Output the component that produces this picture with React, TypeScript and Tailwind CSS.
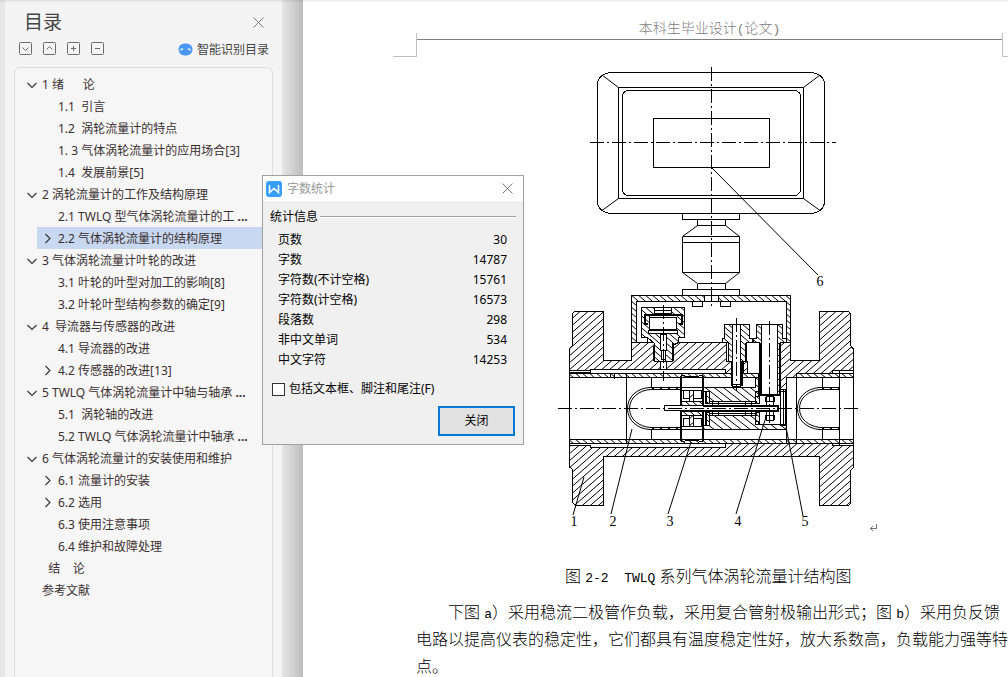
import React, { useState } from 'react';

interface TocItem {
  level: 1 | 2;
  text: string;
  toggle?: 'open' | 'closed';
  active?: boolean;
  cut?: boolean;
}

const tocItems: TocItem[] = [
  { level: 1, text: '1 绪      论', toggle: 'open' },
  { level: 2, text: '1.1  引言' },
  { level: 2, text: '1.2  涡轮流量计的特点' },
  { level: 2, text: '1. 3 气体涡轮流量计的应用场合[3]' },
  { level: 2, text: '1.4  发展前景[5]' },
  { level: 1, text: '2 涡轮流量计的工作及结构原理', toggle: 'open' },
  { level: 2, text: '2.1 TWLQ 型气体涡轮流量计的工', cut: true },
  { level: 2, text: '2.2 气体涡轮流量计的结构原理', toggle: 'closed', active: true },
  { level: 1, text: '3 气体涡轮流量计叶轮的改进', toggle: 'open' },
  { level: 2, text: '3.1 叶轮的叶型对加工的影响[8]' },
  { level: 2, text: '3.2 叶轮叶型结构参数的确定[9]' },
  { level: 1, text: '4  导流器与传感器的改进', toggle: 'open' },
  { level: 2, text: '4.1 导流器的改进' },
  { level: 2, text: '4.2 传感器的改进[13]', toggle: 'closed' },
  { level: 1, text: '5 TWLQ 气体涡轮流量计中轴与轴承', toggle: 'open', cut: true },
  { level: 2, text: '5.1  涡轮轴的改进' },
  { level: 2, text: '5.2 TWLQ 气体涡轮流量计中轴承', cut: true },
  { level: 1, text: '6 气体涡轮流量计的安装使用和维护', toggle: 'open' },
  { level: 2, text: '6.1 流量计的安装', toggle: 'closed' },
  { level: 2, text: '6.2 选用', toggle: 'closed' },
  { level: 2, text: '6.3 使用注意事项' },
  { level: 2, text: '6.4 维护和故障处理' },
  { level: 1, text: '  结    论' },
  { level: 1, text: '参考文献' },
];

const stats = [
  { label: '页数', value: '30' },
  { label: '字数', value: '14787' },
  { label: '字符数(不计空格)', value: '15761' },
  { label: '字符数(计空格)', value: '16573' },
  { label: '段落数', value: '298' },
  { label: '非中文单词', value: '534' },
  { label: '中文字符', value: '14253' },
];

const toolButtons = [
  { name: '展开', d: 'M3.5 5.5 L6.5 8.5 L9.5 5.5' },
  { name: '收起', d: 'M3.5 7.5 L6.5 4.5 L9.5 7.5' },
  { name: '放大', d: 'M4 6.5 H9 M6.5 4 V9' },
  { name: '缩小', d: 'M4 6.5 H9' },
];

function CloseIcon() {
  return (
    <svg width="11" height="11" viewBox="0 0 11 11" fill="none" stroke="#777" strokeWidth="1">
      <path d="M0.5 0.5 L10.5 10.5 M10.5 0.5 L0.5 10.5" />
    </svg>
  );
}

function Sidebar() {
  return (
    <aside className="flex w-[282px] shrink-0 flex-col border-l-[5px] border-[#e7e7e7] bg-[#f4f4f4] pl-[9px] pr-[9px]">
      <div className="flex h-[40px] items-center justify-between pt-1 pl-[10px] pr-[9px]">
        <h2 className="text-[19px] leading-6 text-[#444]">目录</h2>
        <button aria-label="关闭目录">
          <CloseIcon />
        </button>
      </div>
      <div className="flex h-[17px] items-center pl-[5px] pr-[4px]">
        <div className="flex gap-[11px]">
          {toolButtons.map(btn => (
            <button key={btn.name} aria-label={btn.name}>
              <svg width="13" height="13" viewBox="0 0 13 13" fill="none" stroke="#6b6b6b">
                <rect x="0.5" y="0.5" width="12" height="12" rx="1" />
                <path d={btn.d} />
              </svg>
            </button>
          ))}
        </div>
        <button className="ml-auto flex items-center gap-[4px] pt-[2px] text-xs text-[#444]">
          <svg width="15" height="13" viewBox="0 0 15 13">
            <rect x="0.5" y="0.5" width="14" height="12" rx="6" fill="#4a98f3" />
            <path d="M2.5 7.5 Q3.5 5 5 6.5 M10 6.5 Q11.5 5 12.5 7.5" fill="none" stroke="#fff" strokeWidth="1.3" />
          </svg>
          智能识别目录
        </button>
      </div>
      <nav className="mt-[10px] flex-1 rounded-t-md border border-b-0 border-[#dedede] bg-[#f6f6f6] pt-[5px]">
        <ul>
          {tocItems.map(item => (
            <li
              key={item.text}
              className={`flex h-[22px] items-center ${item.level === 1 ? 'ml-[9px]' : 'ml-[22px] pl-[3px]'} ${item.active ? 'bg-[#c9d8f1]' : ''}`}
            >
              <span className="flex w-[18px] shrink-0 items-center pl-[2px]">
                {item.toggle && (
                  <button aria-label={item.toggle === 'open' ? '收起' : '展开'}>
                    <svg width="11" height="11" viewBox="0 0 11 11" fill="none" stroke="#333" strokeWidth="1.1">
                      <path d={item.toggle === 'open' ? 'M1.5 4 L6 8.5 L10.5 4' : 'M3.5 1 L8 5.5 L3.5 10'} />
                    </svg>
                  </button>
                )}
              </span>
              <a href="#" className="whitespace-pre pt-[2px] text-xs leading-5 text-[#3a3030]">
                {item.text}
                {item.cut && <span className="font-bold"> ...</span>}
              </a>
            </li>
          ))}
        </ul>
      </nav>
    </aside>
  );
}

function StatsDialog() {
  const [checked, setChecked] = useState(false);

  return (
    <div
      role="dialog"
      aria-label="字数统计"
      className="absolute left-[262px] top-[175px] z-10 w-[262px] border border-[#a0a0a0] bg-[#f0f0f0] text-xs text-black"
    >
      <div className="flex h-[25px] items-center bg-white pl-[3px] pr-[10px]">
        <svg width="16" height="16" viewBox="0 0 16 16">
          <rect width="16" height="16" rx="3" fill="#369ffb" />
          <path d="M3.5 4 V11.5 L8 7.5 L12.5 11.5 V4" fill="none" stroke="#fff" strokeWidth="1.5" />
        </svg>
        <span className="ml-[5px] text-[#999]">字数统计</span>
        <button className="ml-auto" aria-label="关闭">
          <CloseIcon />
        </button>
      </div>
      <div className="px-[7px] pt-[6px] pb-2">
        <div className="flex h-5 items-center gap-[2px]">
          <span>统计信息</span>
          <span className="h-[2px] flex-1 border-t border-b border-t-[#a0a0a0] border-b-white" />
        </div>
        <table className="mt-[3px] w-full">
          <tbody>
            {stats.map(row => (
              <tr key={row.label} className="h-5">
                <th scope="row" className="p-0 pl-[8px] text-left font-normal leading-5">{row.label}</th>
                <td className="p-0 pr-[9px] text-right leading-5">{row.value}</td>
              </tr>
            ))}
          </tbody>
        </table>
        <label className="mt-[9px] flex h-5 items-center gap-[4px] pl-[2px]">
          <input
            type="checkbox"
            checked={checked}
            onChange={e => setChecked(e.target.checked)}
            className="h-[13px] w-[13px] appearance-none border border-[#333] bg-white checked:bg-[#0078d7]"
          />
          包括文本框、脚注和尾注(F)
        </label>
        <div className="mt-[7px] flex justify-end pr-px">
          <button className="h-[30px] w-[77px] border-2 border-[#0078d7] bg-[#e1e1e1]">关闭</button>
        </div>
      </div>
    </div>
  );
}

function FlowMeterDrawing() {
  return (
    <svg
      width="324"
      height="470"
      viewBox="556 64 324 470"
      fill="none"
      stroke="#000"
      strokeWidth="1"
      shapeRendering="crispEdges"
      role="img"
      aria-label="TWLQ 系列气体涡轮流量计结构图"
    >
      <defs>
        <pattern id="hatch" width="8" height="7" patternUnits="userSpaceOnUse">
          <path d="M-1 7.875 L9 -0.875 M-1 0.875 L1 -0.875 M7 7.875 L9 6.125" strokeWidth="1" shapeRendering="geometricPrecision" />
        </pattern>
        <pattern id="hatchBack" width="7" height="6" patternUnits="userSpaceOnUse">
          <path d="M-1 -0.857 L8 6.857 M6 -0.857 L8 0.857 M-1 5.143 L1 6.857" strokeWidth="1" shapeRendering="geometricPrecision" />
        </pattern>
        <pattern id="hatchWide" width="9" height="7" patternUnits="userSpaceOnUse">
          <path d="M-1 -0.78 L10 7.78 M8 -0.78 L10 0.78 M-1 6.22 L1 7.78" strokeWidth="1" shapeRendering="geometricPrecision" />
        </pattern>
      </defs>

      {/* display head */}
      <rect x="597.5" y="72.5" width="227" height="141" rx="14" ry="12" />
      <rect x="618.5" y="87.5" width="185" height="111" />
      <rect x="622.5" y="90.5" width="178" height="105" rx="6" />
      <rect x="653.5" y="118.5" width="116" height="49" />
      <path
        d="M602 75 L618.5 87.5 M820 75 L803.5 87.5 M602 210.5 L618.5 198.5 M820 210.5 L803.5 198.5"
        shapeRendering="geometricPrecision"
      />

      {/* neck */}
      <path d="M682.5 213 V219.5 H739.5 V213 M697.5 219.5 V225.5 H725.5 V219.5" />
      <path d="M682.5 236.5 V272.5 M697.5 283.5 V289.5 M739.5 236.5 V272.5 M725.5 283.5 V289.5" />
      <path
        d="M697.5 225.5 L682.5 236.5 M682.5 272.5 L697.5 283.5 M725.5 225.5 L739.5 236.5 M739.5 272.5 L725.5 283.5"
        shapeRendering="geometricPrecision"
      />
      <path d="M682.5 236.5 H739.5 M682.5 242.5 H739.5 M682.5 272.5 H739.5 M697.5 283.5 H725.5" />
      <rect x="682.5" y="289.5" width="57" height="6" />

      {/* junction box */}
      <path d="M631.5 342.5 V295.5 H704.5 V301.5 H636.5 V342.5 Z" fill="url(#hatchBack)" />
      <path d="M718.5 295.5 H790.5 V342.5 H786.5 V301.5 H718.5 Z" fill="url(#hatchBack)" />
      <path d="M704 295.5 H719 M704 301.5 H719" />
      <path d="M692.5 301.5 V306.5 H702.5 V301.5 M720.5 301.5 V306.5 H730.5 V301.5" />

      {/* housing, upper half */}
      <path
        d="M569.5 370.5 V348.5 L572.5 345.5 V313.5 L574.5 311.5 H603.5 V360.5 H631.5 V342.5 H654.5 V361.5 H672.5 V342.5 H726.5 V361.5 H731.5 V373.5 H725.5 V369.5 H590.5 V370.5 Z"
        fill="url(#hatch)"
      />
      <path
        d="M780.5 342.5 H790.5 V360.5 H819.5 V311.5 H848.5 L850.5 313.5 V345.5 L853.5 349.5 V370.5 H832.5 V373.5 H796.5 V377.5 H786.5 V391.5 H780.5 Z"
        fill="url(#hatch)"
      />
      <path d="M743 361.5 H747.5 V373.5 H743 Z" fill="url(#hatch)" />
      {/* housing, lower half */}
      <path
        d="M569.5 445.5 H590.5 V447.5 H725.5 V443.5 H832.5 V445.5 H853.5 V467.5 L850.5 470.5 V503.5 L848.5 505.5 H819.5 V456.5 H603.5 V505.5 H575.5 L572.5 502.5 V469.5 L569.5 466.5 Z"
        fill="url(#hatch)"
      />

      {/* liner strips */}
      <rect x="569.5" y="373.5" width="189" height="4" fill="url(#hatchBack)" />
      <rect x="796.5" y="373.5" width="57" height="4" fill="url(#hatchBack)" />
      <rect x="569.5" y="439.5" width="284" height="4" fill="url(#hatchBack)" />
      <path d="M569.5 372.5 H590.5 V369.5 M569.5 348 V468 M853.5 348 V468 M786 377.5 H797" />
      <path d="M614.5 373 V379 M610.5 373 V378" />
      <path d="M626.5 374 V443 M796.5 374 V443 M839.5 370 V446 M786.5 377 V443" />
      <path d="M651.5 377 V387 M651.5 430 V439 M822.5 377 V387 M822.5 430 V439" />

      {/* front and rear nose cones */}
      <g shapeRendering="geometricPrecision">
        <path d="M680 387.5 H650 C637 388 627.5 397 627.5 408.5 C627.5 420 637 429 650 429.5 H680" />
        <path d="M680 389.5 H651 C639 390 629.5 398 629.5 408.5 C629.5 419 639 427 651 427.5 H680" />
        <path d="M839 387.5 H819 C806 389 797.5 397 797.5 408.5 C797.5 420 806 428 819 429.5 H839" />
        <path d="M839 389.5 H820 C808 391 799.5 398 799.5 408.5 C799.5 419 808 426 820 427.5 H839" />
        <path d="M652 388.5 H680 M652 428.5 H680 M822 388.5 H839 M822 428.5 H839" strokeDasharray="2 6" />
      </g>

      {/* pressure valve */}
      <path
        d="M641.5 307.5 H684.5 V337.5 H678.5 V342.5 L672.5 345.5 V361.5 H654.5 V343.5 L647.5 337.5 H641.5 Z"
        fill="#fff"
      />
      <path
        d="M641.5 307.5 H684.5 V337.5 H678.5 V342.5 L672.5 345.5 V361.5 H654.5 V343.5 L647.5 337.5 H641.5 Z"
        fill="url(#hatchBack)"
      />
      <path d="M647.5 337 V342.5" />
      <rect x="654.5" y="307.5" width="17" height="6" fill="#fff" />
      <path d="M654.5 310.5 H671.5" />
      <rect x="649.5" y="315.5" width="27" height="18" fill="#fff" stroke="none" />
      <path d="M644 315 H683 M645 315 V324 H648 M682 315 V324 H679" strokeWidth="2" />
      <rect x="649.5" y="317.5" width="27" height="12" fill="#fff" />
      <rect x="648.5" y="330.5" width="29" height="3" fill="#fff" />
      <rect x="660.5" y="334.5" width="6" height="16" fill="#fff" />
      <rect x="661.5" y="350.5" width="4" height="9" fill="#fff" />
      <rect x="660.5" y="361.5" width="6" height="8" fill="#fff" />
      <path d="M654 346 V361 M673 343 V361" strokeWidth="2" />

      {/* narrow probe */}
      <path d="M724.5 324.5 H749.5 V338.5 H752.5 V342.5 H746.5 V361.5 H728.5 V342.5 H722.5 V338.5 H724.5 Z" fill="#fff" />
      <path d="M724.5 324.5 H749.5 V338.5 H752.5 V342.5 H746.5 V361.5 H728.5 V342.5 H722.5 V338.5 H724.5 Z" fill="url(#hatchBack)" />
      <rect x="732.5" y="324.5" width="8" height="62" fill="#fff" />
      <path d="M732 361 V386 M742 361 V386 M746 343 V361" strokeWidth="2" />
      <path d="M731 384.5 H743 M731 387.5 H743" />

      {/* wide probe */}
      <path d="M756.5 324.5 H782.5 V338.5 H786.5 V342.5 H780.5 V395.5 H759.5 V342.5 H753.5 V338.5 H756.5 Z" fill="#fff" />
      <path d="M756.5 324.5 H782.5 V338.5 H786.5 V342.5 H780.5 V395.5 H759.5 V342.5 H753.5 V338.5 H756.5 Z" fill="url(#hatchBack)" />
      <rect x="761.5" y="324.5" width="16" height="71" fill="#fff" />
      <path d="M760 343 V395 M780 343 V395 M759 395 H781" strokeWidth="2" />

      {/* impeller body */}
      <path d="M702.5 387.5 H755.5 V377.5 H758.5 V396.5 H755.5 V401.5 H709.5 V391.5 H702.5 Z" fill="url(#hatchWide)" />
      <path d="M702.5 429.5 H786.5 V424.5 H758.5 V421.5 H755.5 V415.5 H709.5 V425.5 H702.5 Z" fill="url(#hatchWide)" />
      <rect x="705.5" y="391.5" width="4" height="12" fill="url(#hatchBack)" />
      <rect x="705.5" y="412.5" width="4" height="13" fill="url(#hatchBack)" />
      <rect x="755.5" y="391.5" width="4" height="12" fill="url(#hatchBack)" />
      <rect x="755.5" y="412.5" width="4" height="12" fill="url(#hatchBack)" />
      <path d="M706 392 V403 M706 414 V426" strokeWidth="2" />
      <path d="M709 401.5 H757 M709 403.5 H757 M709 413.5 H757 M709 415.5 H757" />
      <path d="M712.5 402 V415 M718.5 402 V415 M745.5 402 V415 M751.5 402 V415" />
      <path d="M780.5 389.5 V425 M783.5 389.5 V425 M785.5 389.5 V425 M780 389.5 H786 M780 425.5 H786" />

      {/* bearing hub */}
      <rect x="681.5" y="377.5" width="21" height="62" fill="#fff" />
      <path d="M681 376 V441 M703 376 V441" strokeWidth="2" />
      <path d="M681 375.5 H685 M699 375.5 H703 M685 376.5 H699 M681 441.5 H685 M699 441.5 H703 M685 440.5 H699" />
      <path d="M681 387.5 H703 M681 390.5 H703 M681 401.5 H703 M681 415.5 H703 M681 426.5 H703 M681 429.5 H703" />
      <rect x="681.5" y="401.5" width="21" height="4" fill="url(#hatchBack)" />
      <rect x="681.5" y="411.5" width="21" height="4" fill="url(#hatchBack)" />
      <rect x="689.5" y="390.5" width="4" height="11" fill="url(#hatch)" />
      <rect x="689.5" y="415.5" width="4" height="11" fill="url(#hatch)" />
      <path d="M683.5 390 V399 M701.5 390 V399 M683 398.5 H690 M693 398.5 H702" />
      <path d="M683.5 418 V427 M701.5 418 V427 M683 418.5 H690 M693 418.5 H702" />

      {/* magnet and shaft */}
      <rect x="766.5" y="396.5" width="7" height="24" fill="#fff" />
      <path d="M766 401.5 H774 M766 415.5 H774" />
      <path d="M766 397 V402 M774 397 V402 M766 415 V420 M774 415 V420" strokeWidth="2" />
      <rect x="664.5" y="405.5" width="114" height="5" fill="#fff" />
      <path d="M703 406 H779 M703 411 H779 M778 405 V412" strokeWidth="2" />

      {/* centre lines */}
      <g strokeDasharray="14 3 2 3">
        <path d="M711.5 67 V308" />
        <path d="M590 142.5 H836" />
        <path d="M558 408.5 H861" />
        <path d="M663.5 305 V381" />
        <path d="M736.5 318 V391" />
        <path d="M769.5 321 V425" />
      </g>

      {/* leaders */}
      <path
        d="M711.5 167.5 L818 275 M584 477 L573 515 M632 429 L611 514 M691 442 L668 514 M765 420 L736 514 M786 427 L803 516"
        shapeRendering="geometricPrecision"
      />
      <g fill="#000" stroke="none" fontFamily="Liberation Serif, serif" fontSize="14" textAnchor="middle">
        <text x="820" y="286">6</text>
        <text x="574" y="526">1</text>
        <text x="613" y="526">2</text>
        <text x="670" y="526">3</text>
        <text x="738" y="526">4</text>
        <text x="805" y="526">5</text>
      </g>

      {/* paragraph mark */}
      <path d="M876.5 524 V528.5 H870 M873 526 L870.5 528.5 L873 531" stroke="#777" />
    </svg>
  );
}

function Latin({ children }: { children: React.ReactNode }) {
  return <span className="font-['Liberation_Mono',monospace] text-[13px] leading-none">{children}</span>;
}

function DocumentPage() {
  return (
    <main className="min-w-0 flex-1 bg-white pl-[90px] font-light text-black">
      <header className="flex h-[57px]">
        <div className="h-6 w-6 shrink-0 self-end border-r border-b border-[#c0c0c0]" />
        <div className="flex h-[40px] flex-1 justify-center border-b border-[#808080] pt-[18px]">
          <span className="text-sm leading-5 text-[#808080]">
            本科生毕业设计<Latin>(</Latin>论文<Latin>)</Latin>
          </span>
        </div>
        <div className="h-6 w-[6px] shrink-0 self-end border-l border-b border-[#c0c0c0]" />
      </header>
      <div className="mt-[7px] pl-[163px]">
        <FlowMeterDrawing />
      </div>
      <p className="mt-[29px] whitespace-pre pl-[172px] text-base leading-[27px]">
        图 <Latin>2-2  TWLQ</Latin> 系列气体涡轮流量计结构图
      </p>
      <p className="mt-[9px] whitespace-nowrap pl-[23px] indent-8 text-base leading-[27px]">
        下图 <Latin>a</Latin>）采用稳流二极管作负载，采用复合管射极输出形式；图 <Latin>b</Latin>）采用负反馈
        <br />
        电路以提高仪表的稳定性，它们都具有温度稳定性好，放大系数高，负载能力强等特
        <br />
        点。
      </p>
    </main>
  );
}

export default function App() {
  return (
    <div className="relative flex h-screen overflow-hidden bg-white font-['Noto_Sans','Noto_Sans_CJK_SC',sans-serif]">
      <Sidebar />
      <div className="w-[21px] shrink-0 bg-linear-to-r from-[#e6e6e6] to-[#bdbdbd]" />
      <DocumentPage />
      <StatsDialog />
      <div className="pointer-events-none absolute inset-x-0 top-0 h-[3px] bg-linear-to-b from-black/8 to-transparent" />
    </div>
  );
}
